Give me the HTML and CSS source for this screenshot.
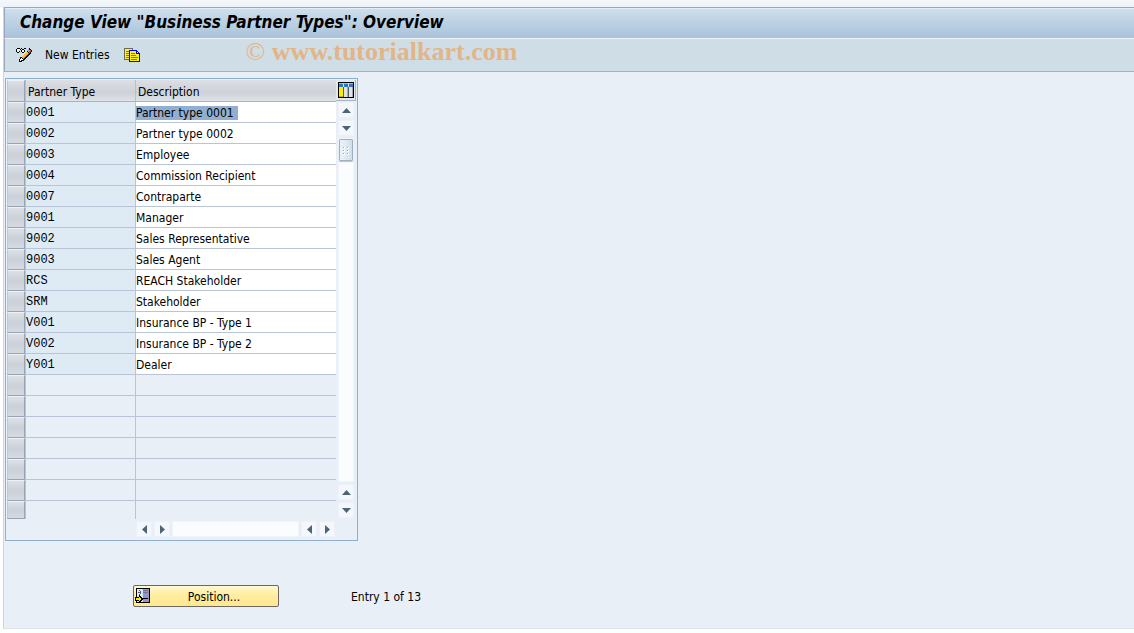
FILE: index.html
```html
<!DOCTYPE html>
<html lang="en">
<head>
<meta charset="utf-8">
<title>Change View "Business Partner Types": Overview</title>
<link rel="stylesheet" href="styles.css">
</head>
<body>
<main class="window">
  <header class="titlebar"><h1>Change View "Business Partner Types": Overview</h1></header>
  <div class="toolbar">
    <button class="tool" aria-label="Display/Change">
      <svg width="17" height="16" viewBox="0 0 17 16" shape-rendering="crispEdges">
        <path d="M1 1h3v1h-3zM0 2h1v3h-1zM1 5h2v1h-2zM4 2h1v1h-1zM5 1h1v1h-1zM3 4h1v1h-1zM5 3h1v2h-1zM6 2h2v1h-2zM8 1h2v1h-2zM8 3h1v2h-1zM6 5h2v1h-2z" fill="#000"/>
        <path d="M1 2h3v1h-1v2h-2zM6 3h2v2h-2z" fill="#fff"/>
        <path d="M12 1h2v1h1v1h1v2h-1v2h-1v1h-1v1h-1v1h-1v1h-1v1h-1v1h-1v1h-2v1h-3v-3h1v-2h1v-1h1v-1h1v-1h1v-1h1v-1h1v-1h1v-1h1v-1h1z" fill="#111"/>
        <path d="M12 2h1v1h1v1h1v1h-1v1h-1v-1h-1v-1h-1v-1h1z" fill="#8fb9e8"/>
        <path d="M14 3h1v2h-1v1h-1v-2h1z" fill="#e0483c"/>
        <path d="M10 4h1v1h1v1h1v1h-1v1h-1v1h-1v1h-1v1h-1v1h-1v-1h-1v-1h-1v-1h1v-1h1v-1h1v-1h1v-1h1z" fill="#ffb640"/>
        <path d="M10 4h1v1h-1v1h-1v1h-1v1h-1v1h-1v1h-1v-1h1v-1h1v-1h1v-1h1v-1h1z" fill="#fff1c0"/>
        <path d="M12 6h1v1h-1v1h-1v1h-1v1h-1v1h-1v1h-1v-1h1v-1h1v-1h1v-1h1v-1h1z" fill="#ee7a14"/>
        <path d="M5 11h1v1h1v1h-2v1h-1v-2h1z" fill="#fff"/>
      </svg>
    </button>
    <button class="tool new">New Entries</button>
    <button class="tool" aria-label="Copy As">
      <svg width="16" height="15" viewBox="0 0 16 15" shape-rendering="crispEdges">
        <path d="M0 0h9v12h-9z" fill="#6b6b5a"/><path d="M1 1h7v10h-7z" fill="#ffef3a"/>
        <path d="M2 3h3v1h-3zM2 5h3v1h-3zM2 7h3v1h-3zM2 9h3v1h-3z" fill="#77724d"/>
        <path d="M5 2h8v1h1v1h1v1h1v9h-11z" fill="#0000e8"/>
        <path d="M6 3h6v3h3v7h-9z" fill="#fff200"/><path d="M13 4h1v1h-1z" fill="#fff"/>
        <path d="M7 5h4v1h-4zM7 7h5v1h-5zM7 9h7v1h-7zM7 11h6v1h-6z" fill="#77724d"/>
      </svg>
    </button>
    <p class="watermark"><span>©</span> www.tutorialkart.com</p>
  </div>

  <section class="content">
    <div class="panel">
      <table class="grid">
        <colgroup><col class="c-sel"><col class="c-type"><col class="c-desc"></colgroup>
        <thead><tr><th><button class="sel" aria-label="Select all"></button></th><th>Partner Type</th><th>Description</th></tr></thead>
        <tbody>
          <tr><td><button class="sel" aria-label="Select row"></button></td><td>0001</td><td><input class="marked" aria-label="Description" value="Partner type 0001"></td></tr>
          <tr><td><button class="sel" aria-label="Select row"></button></td><td>0002</td><td><input aria-label="Description" value="Partner type 0002"></td></tr>
          <tr><td><button class="sel" aria-label="Select row"></button></td><td>0003</td><td><input aria-label="Description" value="Employee"></td></tr>
          <tr><td><button class="sel" aria-label="Select row"></button></td><td>0004</td><td><input aria-label="Description" value="Commission Recipient"></td></tr>
          <tr><td><button class="sel" aria-label="Select row"></button></td><td>0007</td><td><input aria-label="Description" value="Contraparte"></td></tr>
          <tr><td><button class="sel" aria-label="Select row"></button></td><td>9001</td><td><input aria-label="Description" value="Manager"></td></tr>
          <tr><td><button class="sel" aria-label="Select row"></button></td><td>9002</td><td><input aria-label="Description" value="Sales Representative"></td></tr>
          <tr><td><button class="sel" aria-label="Select row"></button></td><td>9003</td><td><input aria-label="Description" value="Sales Agent"></td></tr>
          <tr><td><button class="sel" aria-label="Select row"></button></td><td>RCS</td><td><input aria-label="Description" value="REACH Stakeholder"></td></tr>
          <tr><td><button class="sel" aria-label="Select row"></button></td><td>SRM</td><td><input aria-label="Description" value="Stakeholder"></td></tr>
          <tr><td><button class="sel" aria-label="Select row"></button></td><td>V001</td><td><input aria-label="Description" value="Insurance BP - Type 1"></td></tr>
          <tr><td><button class="sel" aria-label="Select row"></button></td><td>V002</td><td><input aria-label="Description" value="Insurance BP - Type 2"></td></tr>
          <tr><td><button class="sel" aria-label="Select row"></button></td><td>Y001</td><td><input aria-label="Description" value="Dealer"></td></tr>
        </tbody>
        <tbody class="blank">
          <tr><td><button class="sel" aria-label="Select row"></button></td><td></td><td></td></tr>
          <tr><td><button class="sel" aria-label="Select row"></button></td><td></td><td></td></tr>
          <tr><td><button class="sel" aria-label="Select row"></button></td><td></td><td></td></tr>
          <tr><td><button class="sel" aria-label="Select row"></button></td><td></td><td></td></tr>
          <tr><td><button class="sel" aria-label="Select row"></button></td><td></td><td></td></tr>
          <tr><td><button class="sel" aria-label="Select row"></button></td><td></td><td></td></tr>
          <tr><td><button class="sel" aria-label="Select row"></button></td><td></td><td></td></tr>
        </tbody>
      </table>
      <div class="side">
        <button class="config" aria-label="Table settings">
          <svg width="16" height="16" viewBox="0 0 16 16" shape-rendering="crispEdges">
            <path d="M0 0h16v16h-16z" fill="#000"/><path d="M1 1h14v14h-14z" fill="#e9ecf2"/>
            <path d="M1 2h14v3h-14z" fill="#2a78bd"/><path d="M1 1h14v1h-14z" fill="#8fc0e8"/>
            <path d="M1 5h4v9h-4z" fill="#ffed00"/><path d="M1 14h4v1h-4z" fill="#c9b800"/>
            <path d="M5 5h1v10h-1zM10 5h1v10h-1z" fill="#55585f"/>
            <path d="M6 5h3v10h-3zM11 5h3v10h-3z" fill="#e0e2e6"/><path d="M9 5h1v10h-1zM14 5h1v10h-1z" fill="#a4a8b2"/>
            <path d="M5 1h1v4h-1zM10 1h1v4h-1z" fill="#cfe2f2"/>
          </svg>
        </button>
        <div class="vscroll">
          <button class="arrow" aria-label="Scroll up"><svg width="9" height="5" viewBox="0 0 9 5"><path d="M0 5L4.500 0L9 5Z"/></svg></button>
          <button class="arrow" aria-label="Scroll down"><svg width="9" height="5" viewBox="0 0 9 5"><path d="M0 0L4.500 5L9 0Z"/></svg></button>
          <div class="track">
            <button class="thumb" aria-label="Scroll thumb"><svg width="8" height="9" viewBox="0 0 8 9" shape-rendering="crispEdges"><path d="M1 1h2v2h-2zM5 1h2v2h-2zM1 4h2v2h-2zM5 4h2v2h-2zM1 7h2v2h-2zM5 7h2v2h-2z" fill="#fff"/><path d="M1 1h1v1h-1zM5 1h1v1h-1zM1 4h1v1h-1zM5 4h1v1h-1zM1 7h1v1h-1zM5 7h1v1h-1z" fill="#8fa6b8"/></svg></button>
          </div>
          <button class="arrow" aria-label="Page up"><svg width="9" height="5" viewBox="0 0 9 5"><path d="M0 5L4.500 0L9 5Z"/></svg></button>
          <button class="arrow" aria-label="Page down"><svg width="9" height="5" viewBox="0 0 9 5"><path d="M0 0L4.500 5L9 0Z"/></svg></button>
        </div>
      </div>
      <div class="hscroll">
        <button class="arrow" aria-label="Scroll left"><svg width="5" height="9" viewBox="0 0 5 9"><path d="M5 0L0 4.500L5 9Z"/></svg></button>
        <button class="arrow" aria-label="Scroll right"><svg width="5" height="9" viewBox="0 0 5 9"><path d="M0 0L5 4.500L0 9Z"/></svg></button>
        <div class="track"></div>
        <button class="arrow" aria-label="Page left"><svg width="5" height="9" viewBox="0 0 5 9"><path d="M5 0L0 4.500L5 9Z"/></svg></button>
        <button class="arrow" aria-label="Page right"><svg width="5" height="9" viewBox="0 0 5 9"><path d="M0 0L5 4.500L0 9Z"/></svg></button>
      </div>
    </div>

    <div class="footer">
      <button class="position">
        <svg width="16" height="16" viewBox="0 0 16 16" shape-rendering="crispEdges">
          <path d="M1 0h14v15h-14z" fill="#000"/><path d="M2 1h5v13h-5z" fill="#d8eef4"/><path d="M7 1h7v13h-7z" fill="#9494cc"/>
          <path d="M7 1h1v13h-1z" fill="#d7e6ef"/><path d="M8 2h5v1h-5zM8 4h5v1h-5z" fill="#77778c"/><path d="M8 10h5v1h-5z" fill="#000"/>
          <path d="M3 4h3v1h-3zM4 2h1v1h-1zM5 3h1v1h-1zM5 5h1v1h-1zM4 6h1v1h-1z" fill="#50606c"/>
          <path d="M0 9h4v-2h1v1h1v1h1v1h1v2h-1v1h-1v1h-1v1h-1v-2h-4z" fill="#000"/>
          <path d="M1 10h3v-1h1v1h1v2h-1v1h-1v-1h-3z" fill="#ffed00"/>
        </svg>
        <span>Position...</span>
      </button>
      <span class="entry">Entry 1 of 13</span>
    </div>
  </section>
</main>
</body>
</html>
```

FILE: styles.css
```css
* { box-sizing: border-box; }

body {
  margin: 0;
  padding: 7px 0 4px 3px;
  min-height: 100vh;
  display: flex;
  flex-direction: column;
  background: linear-gradient(#f4f7fb, #edf2fa 7px, #fff 8px);
  color: #000;
  font: 12px/16px "DejaVu Sans Condensed", "DejaVu Sans", sans-serif;
}

button {
  margin: 0;
  padding: 0;
  border: 0;
  background: none;
  color: inherit;
  font: inherit;
}

svg { display: block; flex: none; }

.window {
  flex: 1;
  display: flex;
  flex-direction: column;
  background: #e8eff6;
  border-left: 1px solid #cbd6e2;
  border-bottom: 1px solid #dde3ea;
}

.titlebar {
  height: 32px;
  display: flex;
  align-items: center;
  padding: 0 15px 3px;
  background: linear-gradient(#cfdfec, #a9c2da);
  border-top: 1px solid #98a6be;
  border-left: 1px solid #98a6be;
  border-bottom: 1px solid #f0f5f9;
  box-shadow: inset 0 1px #e6eef5;
}

.titlebar h1 {
  margin: 0;
  font: italic bold 17px/20px "DejaVu Sans Condensed", "DejaVu Sans", sans-serif;
}

.toolbar {
  height: 33px;
  display: flex;
  align-items: center;
  gap: 12px;
  padding: 0 11px;
  background: #cfdde7;
  border-left: 1px solid #98a6be;
  border-bottom: 1px solid #a0b2c6;
}
.new { padding-right: 2px; }

.watermark {
  margin: 0 0 6px 94px;
  color: #e2b587;
  font: bold 26px/24px "Liberation Serif", serif;
}
.watermark span { font-weight: normal; }

.content { padding: 6px 1px; }

.panel {
  width: 353px;
  display: grid;
  grid-template-columns: 329px 1fr;
  padding: 1px 1px 3px;
  border: 1px solid #8db0d0;
}

.grid {
  width: 329px;
  table-layout: fixed;
  border-collapse: separate;
  border-spacing: 0;
}
.c-sel { width: 18px; }
.c-type { width: 110px; }
.grid th, .grid td { height: 21px; padding: 0; text-align: left; }
.grid th {
  height: 22px;
  padding: 2px 0 0 2px;
  font-weight: normal;
  background: linear-gradient(#dcdfe3, #cdd2d9 60%, #dfe3e8);
  border-left: 1px solid #b5bfcd;
  border-bottom: 1px solid #a9b4c3;
}
.grid th:first-child { padding: 0; border: 0; }
.grid th .sel { height: 22px; }
.grid td { border-left: 1px solid #b9c5d6; border-bottom: 1px solid #b9c5d6; }
.grid td:first-child { border: 0; }
.grid td:nth-child(2) {
  padding-top: 2px;
  background: #deebf5;
  font: 12px/16px "Liberation Mono", monospace;
}
.grid td:nth-child(3) { padding-top: 2px; background: #fff; }
.blank td:nth-child(2), .blank td:nth-child(3) { background: #e8eff6; }
.blank tr:last-child td { height: 18px; border-bottom: 0; }

.sel {
  display: block;
  width: 18px;
  height: 21px;
  background: linear-gradient(#dde1e6, #cbd0d9 50%, #d6dae1);
  border: 1px solid #98a3b3;
  border-top-color: #eef1f5;
  border-left-color: #c3cad5;
}
.blank tr:last-child .sel { height: 18px; }

.grid input {
  display: block;
  width: 100%;
  height: 14px;
  margin: 0;
  padding: 0;
  border: 0;
  background: none;
  color: inherit;
  font: 12px/14px "DejaVu Sans Condensed", "DejaVu Sans", sans-serif;
}
.grid input.marked { width: 102px; background: #92afd0; }

.side { display: flex; flex-direction: column; }

.config {
  width: 20px;
  height: 21px;
  padding: 1px 1px 2px 2px;
  background: #e4e8ed;
  border-right: 1px solid #a9b4c3;
  border-bottom: 1px solid #a9b4c3;
}

.vscroll {
  flex: 1;
  display: flex;
  flex-direction: column;
  align-items: center;
  gap: 2px;
  width: 20px;
  padding: 1px 0;
}
.hscroll {
  display: flex;
  gap: 2px;
  padding: 2px 1px 0 129px;
}
.arrow {
  width: 16px;
  height: 16px;
  display: flex;
  flex: none;
  align-items: center;
  justify-content: center;
  background: #f4f7fb;
  border: 1px solid #edf1f7;
}
.arrow path { fill: #4d6474; }
.track { flex: 1; background: #fbfcfd; border: 1px solid #f1f4f8; }
.vscroll .track { width: 16px; }
.thumb {
  width: 14px;
  height: 22px;
  display: flex;
  align-items: center;
  justify-content: center;
  background: linear-gradient(90deg, #edf4f9, #cfdfea);
  border: 1px solid #9fb1c1;
  border-radius: 1px;
  box-shadow: 0 1px 1px #b8c3cd;
}

.footer {
  display: flex;
  align-items: center;
  gap: 72px;
  padding: 44px 0 0 128px;
}
.position {
  width: 146px;
  height: 22px;
  display: flex;
  align-items: center;
  padding: 0 1px;
  background: linear-gradient(#fff8d2, #ffeda0 45%, #ffe88e);
  border: 1px solid #6b6862;
  border-radius: 2px;
}
.position span, .entry { padding-top: 2px; }
.position span { flex: 1; }
```
